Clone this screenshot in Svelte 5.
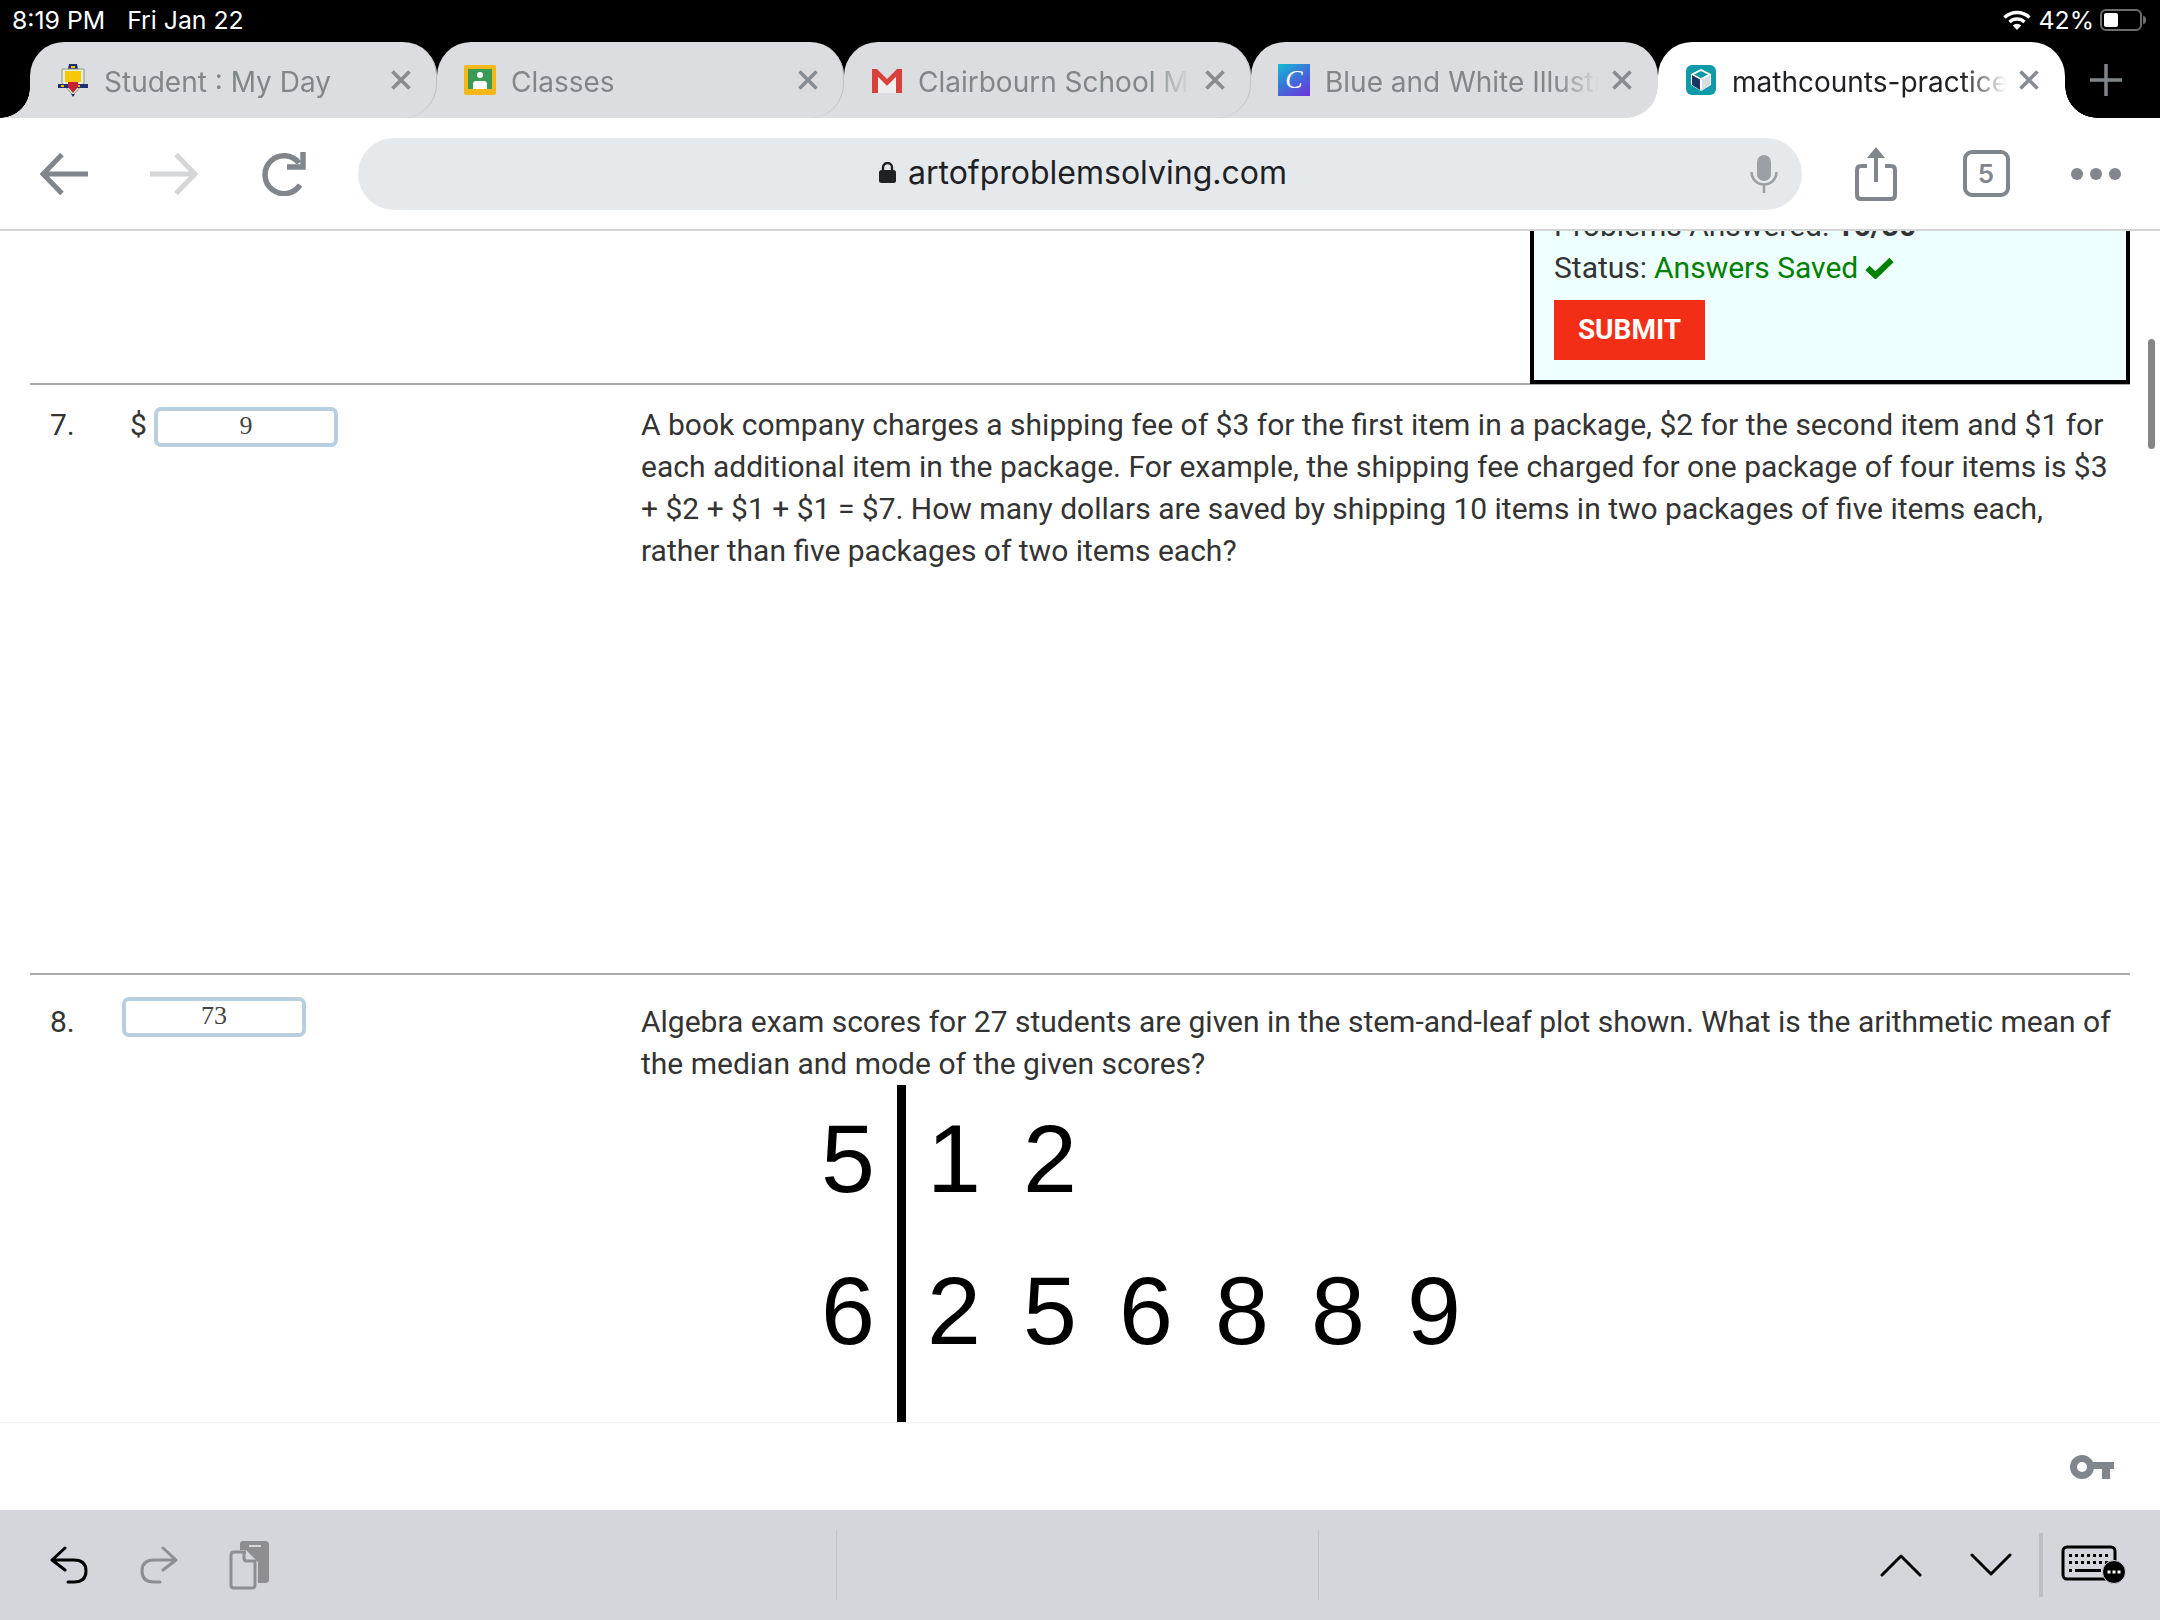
<script lang="ts">
  // iPad Chrome showing an AoPS practice test, scrolled to problems 7 and 8
  const tabs = [
    { id: 'crest', title: 'Student : My Day' },
    { id: 'classroom', title: 'Classes' },
    { id: 'gmail', title: 'Clairbourn School Mail' },
    { id: 'canva', title: 'Blue and White Illustrated' },
    { id: 'aops', title: 'mathcounts-practice-test', active: true }
  ];
  const plot = [
    { stem: 5, leaves: [1, 2] },
    { stem: 6, leaves: [2, 5, 6, 8, 8, 9] }
  ];
</script>

<div class="screen">
  <div class="status">
    <div class="clock"><span>8:19 PM</span><span>Fri Jan 22</span></div>
    <div class="sys">
      <svg width="28" height="22" viewBox="0 0 28 22">
        <path d="M1.500 8.500a18 18 0 0 1 25 0" fill="none" stroke="#fff" stroke-width="3.400" />
        <path d="M6.500 13a11 11 0 0 1 15 0" fill="none" stroke="#fff" stroke-width="3.400" />
        <path d="M14 21l-4.200-4.600a6 6 0 0 1 8.400 0z" fill="#fff" />
      </svg>
      <span>42%</span>
      <div class="battery"><div class="level"></div></div>
    </div>
  </div>

  <div class="tabstrip">
    {#each tabs as tab}
      <div class="tab" class:active={tab.active}>
        <span class="favicon">
          {#if tab.id === 'crest'}
            <svg width="32" height="34" viewBox="0 0 32 34">
              <path d="M12 1h8l1 5H11z" fill="#1d2f6f" />
              <rect x="14" y="3" width="4" height="2" fill="#f4c20d" />
              <path d="M5 6h22v14l-11 12L5 20z" fill="#e9edd8" stroke="#8a9a7a" />
              <rect x="8" y="8" width="16" height="11" fill="#f7c708" />
              <path d="M1 21h30v4H1z" fill="#1d2f6f" />
              <path d="M4 22h3v2H4zM12 22h3v2h-3zM20 22h3v2h-3z" fill="#f4c20d" />
              <path d="M11 19h10v5l-5 6-5-6z" fill="#c8202f" />
              <path d="M14 31h4l-2 3z" fill="#1d2f6f" />
            </svg>
          {:else if tab.id === 'classroom'}
            <svg width="32" height="30" viewBox="0 0 32 30">
              <rect width="32" height="30" rx="2" fill="#f4b919" />
              <rect x="4" y="4" width="24" height="20" fill="#3b9b54" />
              <circle cx="16" cy="10" r="3" fill="#fff" />
              <path d="M9 24v-5q0-3 3-3h8q3 0 3 3v5z" fill="#fff" />
            </svg>
          {:else if tab.id === 'gmail'}
            <svg width="30" height="26" viewBox="0 0 30 26">
              <path d="M0 2h5l10 10L25 2h5v24h-6V10l-9 9-9-9v16H0z" fill="#d8403a" />
              <path d="M6 10l9 9 9-9v16H6z" fill="#efefef" />
            </svg>
          {:else if tab.id === 'canva'}
            <span class="canva">C</span>
          {:else}
            <svg width="30" height="30" viewBox="0 0 30 30">
              <rect width="30" height="30" rx="6" fill="#0e9aa7" />
              <path d="M15 4l10 5v11l-10 6-10-6V9z" fill="#fff" />
              <path d="M6 10l8 4.500v10.500l-8-5z" fill="#1b3461" />
              <path d="M16 14.500l8-4.500v10l-8 5z" fill="#d9dde0" />
              <path d="M15 6l7 3.500-7 3.700-7-3.700z" fill="#0e9aa7" />
            </svg>
          {/if}
        </span>
        <span class="title">{tab.title}</span>
        <svg class="close" width="22" height="22" viewBox="0 0 22 22">
          <path d="M2.500 2.500l17 17M19.500 2.500l-17 17" stroke="#868c91" stroke-width="3.600" />
        </svg>
      </div>
    {/each}
    <div class="newtab">
      <svg width="34" height="34" viewBox="0 0 34 34">
        <path d="M17 1v32M1 17h32" stroke="#80868b" stroke-width="3.500" />
      </svg>
    </div>
  </div>

  <div class="toolbar">
    <div class="slot">
      <svg width="48" height="42" viewBox="0 0 48 42" fill="none" stroke="#80868b" stroke-width="5">
        <path d="M48 21H3M22 1.500L3 21l19 19.500" />
      </svg>
    </div>
    <div class="slot">
      <svg width="48" height="42" viewBox="0 0 48 42" fill="none" stroke="#d4d6d8" stroke-width="5">
        <path d="M0 21h45M26 1.500L45 21 26 40.500" />
      </svg>
    </div>
    <div class="slot">
      <svg width="44" height="44" viewBox="0 0 44 44" fill="none" stroke="#80868b" stroke-width="5.500">
        <path d="M38 33A19 19 0 1 1 37 11" />
        <path d="M41 0v15H25" />
      </svg>
    </div>
    <div class="omnibox">
      <span></span>
      <div class="url">
        <svg width="17" height="21" viewBox="0 0 17 21">
          <rect y="8" width="17" height="13" rx="2.500" fill="#202124" />
          <path d="M4 9V5.500a4.500 4.500 0 0 1 9 0V9" fill="none" stroke="#202124" stroke-width="2.400" />
        </svg>
        artofproblemsolving.com
      </div>
      <svg class="mic" width="28" height="38" viewBox="0 0 28 38">
        <rect x="7" width="14" height="26" rx="7" fill="#9aa0a6" />
        <path d="M1.500 17a12.500 12.500 0 0 0 25 0M14 30v8" fill="none" stroke="#9aa0a6" stroke-width="2.600" />
      </svg>
    </div>
    <div class="slot">
      <svg width="42" height="54" viewBox="0 0 42 54" fill="none" stroke="#80868b">
        <path d="M12 19H6q-4 0-4 4v25q0 4 4 4h30q4 0 4-4V23q0-4-4-4h-6" stroke-width="4" />
        <path d="M21 4v31" stroke-width="4" />
        <path d="M21 0l9 11H12z" fill="#80868b" stroke="none" />
      </svg>
    </div>
    <div class="slot">
      <div class="tabcount">5</div>
    </div>
    <div class="slot">
      <div class="dots"><i></i><i></i><i></i></div>
    </div>
  </div>

  <main class="page">
    <div class="cardrow">
      <aside class="card">
        <div class="line">Problems Answered: <b>16/30</b></div>
        <div class="line">
          Status: <span class="saved">Answers Saved</span>
          <svg width="29" height="22" viewBox="0 0 29 22">
            <path d="M2.500 11l8 7.500L26.500 3" fill="none" stroke="#008000" stroke-width="6" />
          </svg>
        </div>
        <button type="button" class="submit">SUBMIT</button>
      </aside>
    </div>

    <section class="problem first">
      <div class="answer">
        <span class="num">7.</span>
        <span class="dollar">$</span>
        <div class="input">9</div>
      </div>
      <p>
        A book company charges a shipping fee of $3 for the first item in a package, $2 for the second item and $1 for
        each additional item in the package. For example, the shipping fee charged for one package of four items is $3
        + $2 + $1 + $1 = $7. How many dollars are saved by shipping 10 items in two packages of five items each,
        rather than five packages of two items each?
      </p>
    </section>

    <section class="problem second">
      <div class="answer">
        <span class="num">8.</span>
        <div class="input">73</div>
      </div>
      <div class="body">
        <p>
          Algebra exam scores for 27 students are given in the stem-and-leaf plot shown. What is the arithmetic mean of
          the median and mode of the given scores?
        </p>
        <div class="plot">
          <div class="stems">
            {#each plot as row}
              <div class="cell">{row.stem}</div>
            {/each}
          </div>
          <div class="leaves">
            {#each plot as row}
              <div class="leafrow">
                {#each row.leaves as leaf}
                  <span class="leaf">{leaf}</span>
                {/each}
              </div>
            {/each}
          </div>
        </div>
      </div>
    </section>

    <div class="scrollthumb"></div>
  </main>

  <div class="accessory">
    <svg width="44" height="24" viewBox="0 0 44 24">
      <circle cx="12" cy="12" r="12" fill="#80868b" />
      <circle cx="12" cy="12" r="5" fill="#fff" />
      <path d="M20 7h24v7h-4v10h-8V14H20z" fill="#80868b" />
    </svg>
  </div>

  <div class="keybar">
    <div class="group left">
      <div class="key">
        <svg width="38" height="38" viewBox="0 0 38 38" fill="none" stroke="#000" stroke-width="3" stroke-linecap="round" stroke-linejoin="round">
          <path d="M15 2L2 14l13 10M2 14h22q12 0 12 11 0 11-12 11h-6" />
        </svg>
      </div>
      <div class="key">
        <svg width="38" height="38" viewBox="0 0 38 38" fill="none" stroke="#8e8e92" stroke-width="3" stroke-linecap="round" stroke-linejoin="round">
          <path d="M23 2l13 12-13 10M36 14H14Q2 14 2 25q0 11 12 11h6" />
        </svg>
      </div>
      <div class="key">
        <svg width="40" height="49" viewBox="0 0 40 49">
          <path d="M14 0h22q4 0 4 4v35q0 3-4 3h-7V21L17 9h-6V3q0-3 3-3z" fill="#8e8e92" />
          <rect x="20" y="4" width="12" height="2" fill="#d5d6db" />
          <path d="M15 11v6q0 3 3 3h8v24q0 3-3 3H5q-3 0-3-3V14q0-3 3-3h12z" fill="none" stroke="#8e8e92" stroke-width="3" />
        </svg>
      </div>
    </div>
    <div class="sep"></div>
    <div class="group mid"></div>
    <div class="sep"></div>
    <div class="group right">
      <div class="key">
        <svg width="42" height="24" viewBox="0 0 42 24" fill="none" stroke="#000" stroke-width="3" stroke-linecap="round" stroke-linejoin="round">
          <path d="M2 22L21 3l19 19" />
        </svg>
      </div>
      <div class="key">
        <svg width="42" height="24" viewBox="0 0 42 24" fill="none" stroke="#000" stroke-width="3" stroke-linecap="round" stroke-linejoin="round">
          <path d="M2 2l19 19L40 2" />
        </svg>
      </div>
      <div class="bar"></div>
      <svg class="kbd" width="66" height="40" viewBox="0 0 66 40">
        <rect x="2" y="2" width="52" height="32" rx="4" fill="none" stroke="#000" stroke-width="3" />
        <path d="M8 9h3v3H8zM14 9h3v3h-3zM20 9h3v3h-3zM26 9h3v3h-3zM32 9h3v3h-3zM38 9h3v3h-3zM44 9h3v3h-3zM8 16h3v3H8zM14 16h3v3h-3zM20 16h3v3h-3zM26 16h3v3h-3zM32 16h3v3h-3zM38 16h3v3h-3zM44 16h3v3h-3zM8 24h3v3H8zM14 24h26v3H14z" fill="#000" />
        <circle cx="53" cy="27" r="11.500" fill="#000" stroke="#d5d6db" stroke-width="1" />
        <path d="M46.500 25.500h3v3h-3zM51.500 25.500h3v3h-3zM56.500 25.500h3v3h-3z" fill="#fff" />
      </svg>
    </div>
  </div>
</div>

<style>
  :global(body) {
    margin: 0;
    background: #fff;
  }
  .screen {
    width: 2160px;
    height: 1620px;
    display: flex;
    flex-direction: column;
    overflow: hidden;
    font-family: Inter, "Liberation Sans", sans-serif;
  }

  /* status bar */
  .status {
    height: 42px;
    flex: none;
    background: #000;
    color: #fff;
    font-size: 24.800px;
    display: flex;
    justify-content: space-between;
    align-items: center;
    padding: 0 18px 2px 12px;
    box-sizing: border-box;
  }
  .clock {
    display: flex;
    gap: 22px;
  }
  .sys {
    display: flex;
    align-items: center;
    gap: 8px;
  }
  .battery {
    width: 42px;
    height: 22px;
    border: 2px solid #6d6d6d;
    border-radius: 6px;
    padding: 2px;
    box-sizing: border-box;
    margin-left: -2px;
    position: relative;
  }
  .battery::after {
    content: '';
    position: absolute;
    right: -6px;
    top: 5px;
    width: 3px;
    height: 8px;
    background: #6d6d6d;
    border-radius: 0 3px 3px 0;
  }
  .level {
    width: 42%;
    height: 100%;
    background: #fff;
    border-radius: 2px;
  }

  /* tabs */
  .tabstrip {
    height: 76px;
    flex: none;
    background: #000;
    display: flex;
    padding-left: 30px;
  }
  .tab {
    position: relative;
    width: 407px;
    flex: none;
    background: #dcdde0;
    border-radius: 34px 34px 0 0;
    display: flex;
    align-items: center;
    padding: 0 25px 0 27px;
    box-sizing: border-box;
    color: #80868b;
    font-size: 28px;
    z-index: 1;
  }
  .tab:not(.active)::after {
    content: '';
    position: absolute;
    inset: 0;
    border-right: 1.500px solid #bfc1c5;
    border-radius: 0 34px 34px 0;
    pointer-events: none;
  }
  .tab:nth-child(4)::after {
    border-right-color: transparent;
  }
  .tab:first-child::before {
    content: '';
    position: absolute;
    left: -30px;
    bottom: 0;
    width: 30px;
    height: 30px;
    background: radial-gradient(circle at 0 0, transparent 29.500px, #dcdde0 30px);
  }
  .tab.active {
    background: #fff;
    color: #202124;
    z-index: 2;
  }
  .tab.active::before,
  .tab.active::after {
    content: '';
    position: absolute;
    bottom: 0;
    width: 32px;
    height: 32px;
  }
  .tab.active::before {
    left: -32px;
    background: radial-gradient(circle at 0 0, transparent 31.500px, #fff 32px);
  }
  .tab.active::after {
    right: -32px;
    background: radial-gradient(circle at 100% 0, transparent 31.500px, #fff 32px);
  }
  .favicon {
    width: 32px;
    height: 34px;
    flex: none;
    display: flex;
    align-items: center;
    justify-content: center;
    margin-right: 15px;
  }
  .canva {
    width: 32px;
    height: 32px;
    background: linear-gradient(145deg, #12bcd4, #3f6fd8 50%, #6f2fdc);
    color: #fff;
    font: italic 26px/32px "Liberation Serif", serif;
    text-align: center;
  }
  .title {
    flex: 1;
    min-width: 0;
    padding-top: 3px;
    white-space: nowrap;
    overflow: hidden;
    -webkit-mask-image: linear-gradient(to left, transparent 0, #000 44px);
    mask-image: linear-gradient(to left, transparent 0, #000 44px);
  }
  .close {
    flex: none;
    margin-left: 12px;
  }
  .newtab {
    flex: 1;
    display: flex;
    align-items: center;
    padding-left: 24px;
  }

  /* toolbar */
  .toolbar {
    height: 113px;
    flex: none;
    display: flex;
    align-items: center;
    padding: 0 9px;
    box-sizing: border-box;
    border-bottom: 2px solid #d4d4d4;
    background: #fff;
  }
  .slot {
    width: 110px;
    flex: none;
    display: flex;
    justify-content: center;
    align-items: center;
  }
  .omnibox {
    flex: 1;
    height: 72px;
    margin: 0 19px;
    background: #e6e9ec;
    border-radius: 36px;
    display: grid;
    grid-template-columns: 1fr auto 1fr;
    align-items: center;
    box-sizing: border-box;
  }
  .url {
    display: flex;
    align-items: center;
    gap: 12px;
    font-size: 32px;
    color: #202124;
    padding: 0 0 2px 6px;
  }
  .mic {
    justify-self: end;
    margin-right: 24px;
  }
  .tabcount {
    width: 47px;
    height: 47px;
    box-sizing: border-box;
    border: 4px solid #80868b;
    border-radius: 9px;
    color: #80868b;
    font-size: 26px;
    font-weight: 600;
    display: flex;
    align-items: center;
    justify-content: center;
  }
  .dots {
    display: flex;
    gap: 7px;
  }
  .dots i {
    width: 12px;
    height: 12px;
    background: #80868b;
    border-radius: 50%;
  }

  /* page */
  .page {
    flex: 1;
    min-height: 0;
    overflow: hidden;
    position: relative;
    font-family: Roboto, "Liberation Sans", sans-serif;
    font-size: 30px;
    line-height: 42px;
    color: #333;
    border-bottom: 1px solid #f1f1f1;
  }
  .cardrow {
    display: flex;
    justify-content: flex-end;
    margin: -30px 30px 0 30px;
  }
  .card {
    width: 600px;
    box-sizing: border-box;
    background: #eeffff;
    border: 4px solid #000;
    padding: 0 20px 20px;
    margin-bottom: -1px;
  }
  .line {
    height: 42px;
    display: flex;
    align-items: center;
    gap: 7px;
  }
  .saved {
    color: #008000;
  }
  .submit {
    display: block;
    margin-top: 11px;
    width: 151px;
    height: 60px;
    background: #f22e16;
    border: 0;
    color: #fff;
    font: 700 28px/56px Roboto, sans-serif;
    padding: 0;
  }
  .problem {
    margin: 0 30px;
    display: grid;
    grid-template-columns: 611px 1fr;
    border-top: 2px solid #aaa;
  }
  .problem p {
    margin: 0;
    width: 1480px;
  }
  .first {
    height: 590px;
    padding-top: 19px;
    box-sizing: border-box;
  }
  .second {
    padding-top: 26px;
  }
  .answer {
    display: flex;
    align-items: flex-start;
    padding-left: 20px;
  }
  .num {
    width: 72px;
  }
  .dollar {
    margin-left: 8px;
    width: 24px;
  }
  .input {
    width: 184px;
    height: 40px;
    box-sizing: border-box;
    border: 4px solid #b8cfe0;
    border-radius: 7px;
    background: #fff;
    font: 26px/30px "Liberation Serif", serif;
    text-align: center;
    color: #444;
  }
  .first .input {
    margin-top: 3px;
  }
  .second .input {
    margin-top: -4px;
  }
  .plot {
    display: flex;
    margin: 0 0 0 159px;
    font-family: "Liberation Sans", Arial, sans-serif;
    font-size: 97px;
    line-height: 148px;
    color: #000;
    min-height: 420px;
  }
  .stems {
    width: 106px;
    box-sizing: border-box;
    border-right: 9px solid #000;
    display: flex;
    flex-direction: column;
    gap: 4px;
  }
  .cell {
    text-align: center;
    padding-right: 1px;
    height: 148px;
  }
  .leaves {
    display: flex;
    flex-direction: column;
    gap: 4px;
  }
  .leafrow {
    display: flex;
    height: 148px;
  }
  .leaf {
    width: 96px;
    text-align: center;
  }
  .scrollthumb {
    position: absolute;
    left: 2148px;
    top: 108px;
    width: 7px;
    height: 110px;
    border-radius: 4px;
    background: #858585;
  }

  /* keyboard accessory */
  .accessory {
    height: 87px;
    flex: none;
    display: flex;
    justify-content: flex-end;
    align-items: center;
    padding: 0 46px 0 0;
    box-sizing: border-box;
    background: #fff;
  }
  .keybar {
    height: 110px;
    flex: none;
    background: #d5d6db;
    display: flex;
    align-items: center;
  }
  .group {
    display: flex;
    align-items: center;
    height: 100%;
  }
  .left {
    width: 836px;
    padding-left: 24px;
    box-sizing: border-box;
  }
  .mid {
    width: 481px;
  }
  .sep {
    width: 1px;
    height: 70px;
    background: #c2c3c8;
  }
  .right {
    flex: 1;
    justify-content: flex-end;
  }
  .key {
    width: 90px;
    display: flex;
    justify-content: center;
  }
  .bar {
    width: 4px;
    height: 64px;
    background: #bdbec3;
    margin: 0 18px 0 3px;
  }
  .kbd {
    margin-right: 33px;
  }
</style>
